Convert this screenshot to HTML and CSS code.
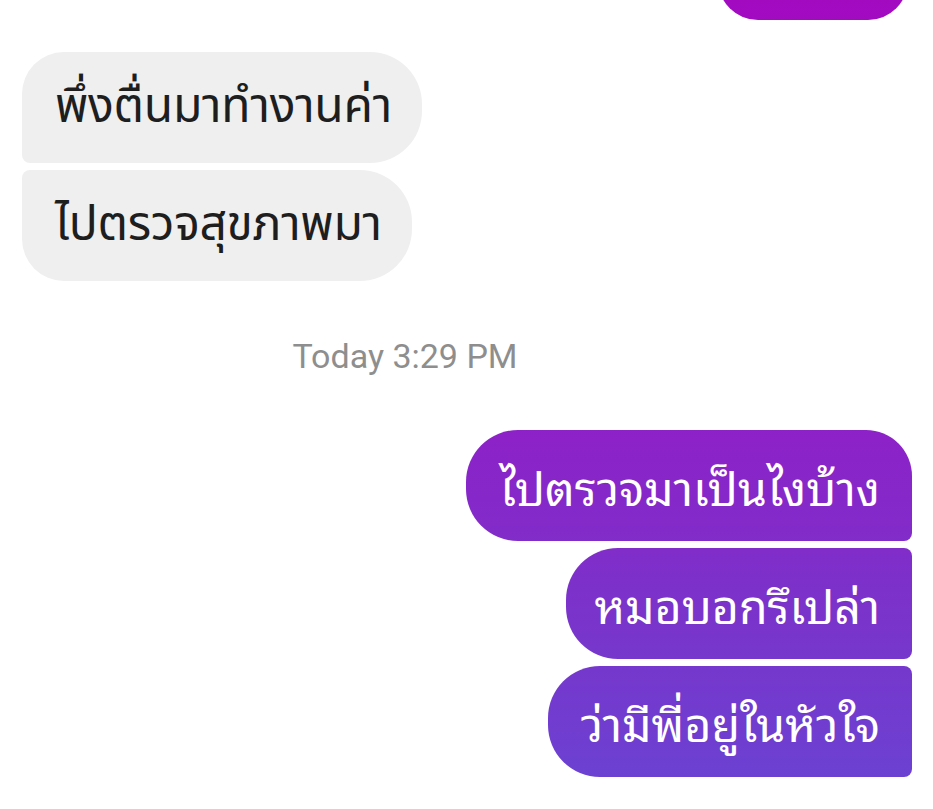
FILE: index.html
```html
<!DOCTYPE html>
<html lang="th">
<head>
<meta charset="utf-8">
<title>Chat</title>
<link rel="stylesheet" href="styles.css">
</head>
<body>
<div class="chat">
  <div class="row out"><div class="bubble out-bubble top-cut"></div></div>
  <div class="group in-group">
    <div class="bubble in-bubble first">พึ่งตื่นมาทำงานค่า</div>
    <div class="bubble in-bubble last">ไปตรวจสุขภาพมา</div>
  </div>
  <div class="stamp">Today 3:29 PM</div>
  <div class="group out-group">
    <div class="bubble out-bubble first">ไปตรวจมาเป็นไงบ้าง</div>
    <div class="bubble out-bubble mid">หมอบอกรึเปล่า</div>
    <div class="bubble out-bubble last">ว่ามีพี่อยู่ในหัวใจ</div>
  </div>
</div>
</body>
</html>
```
FILE: styles.css
```css
html, body {
  margin: 0;
  padding: 0;
  background: #ffffff;
  overflow: hidden;
}
.chat {
  width: 933px;
  height: 809px;
  box-sizing: border-box;
  padding: 0 21px 0 22px;
  display: flex;
  flex-direction: column;
  font-family: "Noto Sans Thai", "Noto Sans", "DejaVu Sans", sans-serif;
}
.row {
  display: flex;
  justify-content: flex-end;
}
.group {
  display: flex;
  flex-direction: column;
  gap: 7px;
}
.in-group {
  align-items: flex-start;
  margin-top: 32px;
}
.out-group {
  align-items: flex-end;
  margin-top: 54px;
}
.bubble {
  box-sizing: border-box;
  height: 111px;
  display: flex;
  align-items: center;
  line-height: 1;
  white-space: nowrap;
}
.in-bubble {
  background: #efefef;
  color: #1e1e1e;
  padding: 0 30px 0 33px;
  font-family: "Noto Sans Thai", "Garuda", "Loma", sans-serif;
  font-size: 48px;
  letter-spacing: -0.3px;
}
.in-bubble.first {
  border-radius: 42px 52px 52px 8px;
}
.in-bubble.last {
  border-radius: 8px 52px 52px 42px;
}
.out-bubble {
  color: #ffffff;
  padding: 0 32px 0 33px;
  font-family: "Noto Sans Thai Looped", "Loma", "Garuda", "Noto Sans Thai", sans-serif;
  font-size: 46.5px;
  background: linear-gradient(180deg, #a20ac0 0px, #8c22c8 440px, #7a33cb 610px, #6b42d2 790px);
  background-attachment: fixed;
}
.out-bubble.top-cut {
  width: 190px;
  height: 110px;
  margin-top: -90px;
  margin-right: 4px;
  border-radius: 40px;
  padding: 0;
}
.out-bubble.first {
  border-radius: 52px 46px 8px 52px;
}
.out-bubble.mid {
  border-radius: 52px 8px 8px 52px;
  padding-left: 28px;
}
.out-bubble.last {
  border-radius: 52px 8px 8px 52px;
}
.stamp {
  margin-top: 55px;
  text-align: center;
  padding-right: 124px;
  font-family: Roboto, "Liberation Sans", sans-serif;
  font-size: 34px;
  color: #8e8e8e;
  line-height: 40px;
}
```
